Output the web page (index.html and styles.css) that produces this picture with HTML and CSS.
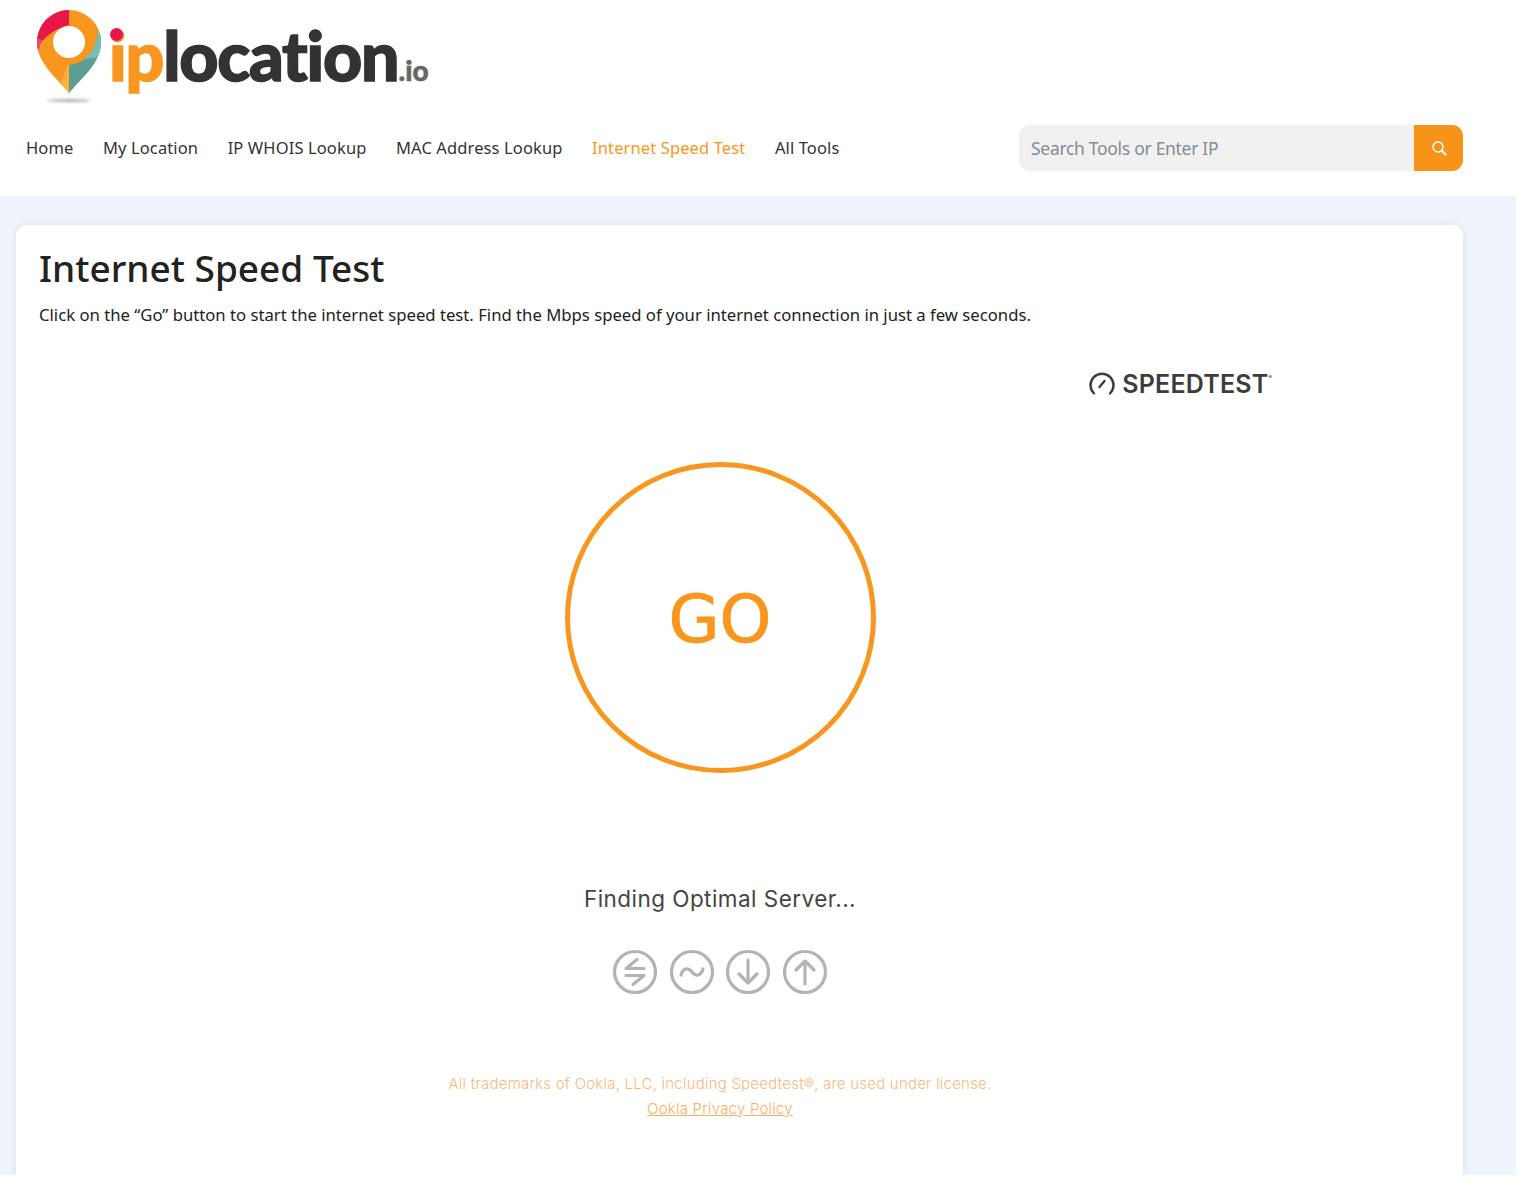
FILE: index.html
```html
<!DOCTYPE html>
<html lang="en">
<head>
    <meta charset="UTF-8">
    <meta name="viewport" content="width=device-width, initial-scale=1.0">
    <title>Internet Speed Test - iplocation.io</title>
    <link rel="stylesheet" href="styles.css">
</head>
<body>
    <div class="page">
        <header class="site-header">
            <a class="logo" href="#">
                <svg class="logo-pin" width="70" height="100" viewBox="0 0 70 100">
                    <defs>
                        <clipPath id="pinClip">
                            <path d="M35 86C25 73 3 57 3 35A32 32 0 0 1 67 35C67 57 45 73 35 86Z"/>
                        </clipPath>
                        <filter id="pinShadow" x="-20%" y="-200%" width="140%" height="500%">
                            <feGaussianBlur stdDeviation="1.5"/>
                        </filter>
                    </defs>
                    <ellipse cx="35" cy="93.5" rx="22" ry="1.5" fill="#aaa" filter="url(#pinShadow)"/>
                    <g clip-path="url(#pinClip)">
                        <rect width="70" height="100" fill="#f8961d"/>
                        <path d="M35 86V60L46 58L40 80Z" fill="#5a9e94"/>
                        <path d="M26 78L35 56V86Z" fill="#fbb03b"/>
                        <path d="M35 0H0V50C4 36 14 24 35 18Z" fill="#e8174a"/>
                        <path d="M0 30L3 50C4 44 6 39 8 33Z" fill="#ea4a73"/>
                        <path d="M35 58C52 56 62 44 64 24L70 30V90H35Z" fill="#5a9e94"/>
                        <path d="M50 52C59 46 63 36 64 24L70 30V50Z" fill="#73c0b3"/>
                    </g>
                    <circle cx="35" cy="35" r="16" fill="#fff"/>
                </svg>
                <span class="logo-name"><span class="logo-ip"><span class="logo-i">i</span>p</span>location<span class="logo-tld">.io</span></span>
            </a>
            <div class="nav-row">
                <nav class="main-nav">
                    <a href="#">Home</a>
                    <a href="#">My Location</a>
                    <a href="#">IP WHOIS Lookup</a>
                    <a href="#">MAC Address Lookup</a>
                    <a href="#" class="active">Internet Speed Test</a>
                    <a href="#">All Tools</a>
                </nav>
                <form class="search-box">
                    <input type="text" placeholder="Search Tools or Enter IP">
                    <button type="button" aria-label="Search">
                        <svg width="16" height="16" viewBox="0 0 16 16" fill="none" stroke="#fff" stroke-width="1.5" stroke-linecap="round">
                            <circle cx="7" cy="7" r="5"/>
                            <path d="M10.8 10.8L14.5 14.5" stroke-width="2"/>
                        </svg>
                    </button>
                </form>
            </div>
        </header>

        <main class="card">
            <h1>Internet Speed Test</h1>
            <p class="intro">Click on the “Go” button to start the internet speed test. Find the Mbps speed of your internet connection in just a few seconds.</p>

            <section class="speedtest">
                <div class="ookla-row">
                    <div class="ookla-logo">
                        <svg width="28" height="24" viewBox="0 0 28 24" fill="none" stroke="#3d3d3d" stroke-width="2.4" stroke-linecap="round">
                            <path d="M6 21.5A11.5 11.5 0 1 1 22 21.5"/>
                            <path d="M11.5 15L16.5 9"/>
                        </svg>
                        <span>SPEEDTEST</span><sup>®</sup>
                    </div>
                </div>
                <button class="go-btn" type="button">GO</button>
                <p class="status">Finding Optimal Server...</p>
                <div class="metric-icons">
                    <svg width="46" height="46" viewBox="0 0 46 46">
                        <circle cx="23" cy="23" r="20.5"/>
                        <path d="M32 19.500H14L25 10.500M14 26.500H32L21 35.500"/>
                    </svg>
                    <svg width="46" height="46" viewBox="0 0 46 46">
                        <circle cx="23" cy="23" r="20.5"/>
                        <path d="M12 26C14 19 19 18 23 23C27 28 32 27 34 20"/>
                    </svg>
                    <svg width="46" height="46" viewBox="0 0 46 46">
                        <circle cx="23" cy="23" r="20.5"/>
                        <path d="M23 11V34M14 25L23 34L32 25"/>
                    </svg>
                    <svg width="46" height="46" viewBox="0 0 46 46">
                        <circle cx="23" cy="23" r="20.5"/>
                        <path d="M23 35V12M14 21L23 12L32 21"/>
                    </svg>
                </div>
                <p class="legal">All trademarks of Ookla, LLC, including Speedtest®, are used under license.<br><a href="#">Ookla Privacy Policy</a></p>
            </section>
        </main>
    </div>
</body>
</html>
```

FILE: styles.css
```css
* {
    margin: 0;
    padding: 0;
    box-sizing: border-box;
}
body {
    font-family: 'Noto Sans', 'Open Sans', sans-serif;
    background: #fff;
    color: #222;
}
a {
    text-decoration: none;
}
.page {
    width: 1516px;
    height: 1175px;
    background: #eff4fc;
    overflow: hidden;
}
.site-header {
    background: #fff;
    height: 196px;
}
.logo {
    display: flex;
    align-items: flex-start;
    height: 125px;
    padding: 7px 0 0 34px;
}
.logo-name {
    font-family: 'Lato', sans-serif;
    font-weight: 900;
    font-size: 68px;
    line-height: 80px;
    letter-spacing: -1.2px;
    color: #333;
    margin: 8px 0 0 5px;
    -webkit-text-stroke: 1.5px #333;
}
.logo-ip {
    color: #f8961d;
    -webkit-text-stroke-color: #f8961d;
}
.logo-i {
    position: relative;
}
.logo-i::before {
    content: "";
    position: absolute;
    left: 1px;
    top: 14px;
    width: 13px;
    height: 13px;
    border-radius: 50%;
    background: #e8174a;
}
.logo-tld {
    font-size: 28px;
    letter-spacing: 0;
    color: #666;
    -webkit-text-stroke: 0.5px #666;
}
.nav-row {
    display: flex;
    align-items: center;
    justify-content: space-between;
    height: 46px;
    padding: 0 53px 0 26px;
}
.main-nav {
    display: flex;
    gap: 29.5px;
    margin-top: -2px;
}
.main-nav a {
    font-size: 16.500px;
    letter-spacing: 0.12px;
    color: #333;
}
.main-nav a.active {
    color: #f8961d;
}
.search-box {
    display: flex;
    width: 444px;
    height: 46px;
    border-radius: 11px;
    overflow: hidden;
    background: #f1f1f1;
}
.search-box input {
    flex: 1;
    border: none;
    background: transparent;
    padding: 0 12px;
    font-family: inherit;
    font-size: 17.500px;
    letter-spacing: -0.3px;
    outline: none;
}
.search-box input::placeholder {
    color: #858b94;
}
.search-box button {
    width: 49px;
    border: none;
    background: #f8931a;
    display: flex;
    align-items: center;
    justify-content: center;
}
.card {
    width: 1447px;
    height: 950px;
    margin: 29px 0 0 16px;
    padding: 18px 23px 0;
    background: #fff;
    border-radius: 11px 11px 0 0;
    box-shadow: 0 0 8px rgba(0, 0, 0, 0.08);
}
.card h1 {
    font-size: 37px;
    font-weight: 500;
    line-height: 50px;
    color: #222;
}
.intro {
    font-size: 16.700px;
    line-height: 24px;
    margin-top: 10px;
    color: #222;
}
.speedtest {
    width: 1362px;
    display: flex;
    flex-direction: column;
    align-items: center;
}
.ookla-row {
    width: 100%;
    display: flex;
    justify-content: flex-end;
    padding: 42px 129px 0 0;
}
.ookla-logo {
    display: flex;
    align-items: center;
    gap: 6px;
    height: 30px;
    color: #3d3d3d;
    font-family: 'Inter', sans-serif;
    font-weight: 600;
    font-size: 25px;
    letter-spacing: 0.2px;
}
.ookla-logo sup {
    font-size: 5px;
    margin: -14px 0 0 -6px;
}
.go-btn {
    width: 311px;
    height: 311px;
    margin-top: 63px;
    padding-top: 4px;
    border: 5px solid #f8961d;
    border-radius: 50%;
    background: #fff;
    color: #f8961d;
    font-family: 'DejaVu Sans', sans-serif;
    font-size: 66px;
    font-weight: 400;
    -webkit-text-stroke: 0.8px #f8961d;
}
.status {
    margin-top: 110px;
    font-family: 'Inter', sans-serif;
    font-size: 22.500px;
    letter-spacing: 0.45px;
    line-height: 32px;
    color: #444;
}
.metric-icons {
    display: flex;
    gap: 10.700px;
    margin-top: 34px;
}
.metric-icons svg {
    fill: none;
    stroke: #b3b3b3;
    stroke-width: 3.2;
    stroke-linecap: round;
    stroke-linejoin: round;
}
.legal {
    margin-top: 76px;
    font-family: 'Inter', sans-serif;
    font-size: 15px;
    font-weight: 300;
    letter-spacing: 0.22px;
    line-height: 25px;
    text-align: center;
    color: #fbb97a;
}
.legal a {
    color: #fbae60;
    text-decoration: underline;
}
```
